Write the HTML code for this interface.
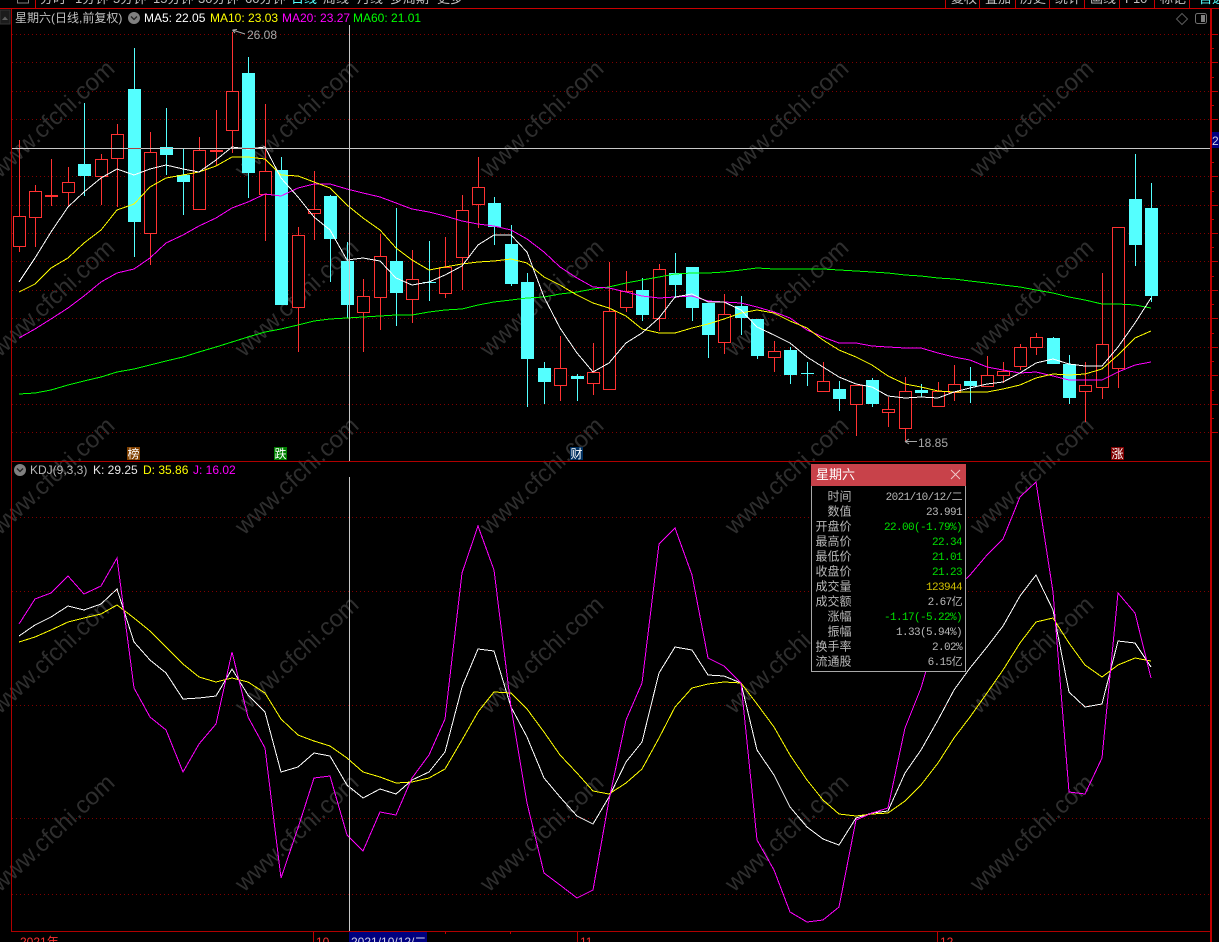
<!DOCTYPE html>
<html lang="zh">
<head>
<meta charset="utf-8">
<title>星期六 K线</title>
<style>
html,body{margin:0;padding:0;background:#000;width:1219px;height:942px;overflow:hidden}
svg{display:block;position:absolute;left:0;top:0}
text{font-family:"Liberation Sans","WenQuanYi Zen Hei","Noto Sans CJK SC",sans-serif;font-size:12px}
.m{font-family:"Liberation Mono","WenQuanYi Zen Hei","Noto Sans CJK SC",monospace;font-size:11px;letter-spacing:-.6px}
.wm text{font-size:24px;fill:#2e2e2e;text-anchor:middle}
</style>
</head>
<body>
<svg width="1219" height="942" viewBox="0 0 1219 942" xmlns="http://www.w3.org/2000/svg">
<rect width="1219" height="942" fill="#000"/>

<!-- grid -->
<g shape-rendering="crispEdges">
<path fill="none" stroke="#800000" stroke-dasharray="1 3" d="M12 34.5H1210M12 62.5H1210M12 91.5H1210M12 119.5H1210M12 176.5H1210M12 205.5H1210M12 233.5H1210M12 261.5H1210M12 290.5H1210M12 318.5H1210M12 347.5H1210M12 375.5H1210M12 404.5H1210M12 432.5H1210M12 517.5H1210M12 591.5H1210M12 705.5H1210M12 818.5H1210M12 894.5H1210"/>
</g>

<!-- watermark -->
<g class="wm">
<text x="52" y="127" transform="rotate(-43 52 118)">www.cfchi.com</text>
<text x="296" y="127" transform="rotate(-43 296 118)">www.cfchi.com</text>
<text x="541" y="127" transform="rotate(-43 541 118)">www.cfchi.com</text>
<text x="786" y="127" transform="rotate(-43 786 118)">www.cfchi.com</text>
<text x="1031" y="127" transform="rotate(-43 1031 118)">www.cfchi.com</text>
<text x="52" y="306" transform="rotate(-43 52 297)">www.cfchi.com</text>
<text x="296" y="306" transform="rotate(-43 296 297)">www.cfchi.com</text>
<text x="541" y="306" transform="rotate(-43 541 297)">www.cfchi.com</text>
<text x="786" y="306" transform="rotate(-43 786 297)">www.cfchi.com</text>
<text x="1031" y="306" transform="rotate(-43 1031 297)">www.cfchi.com</text>
<text x="52" y="484" transform="rotate(-43 52 475)">www.cfchi.com</text>
<text x="296" y="484" transform="rotate(-43 296 475)">www.cfchi.com</text>
<text x="541" y="484" transform="rotate(-43 541 475)">www.cfchi.com</text>
<text x="786" y="484" transform="rotate(-43 786 475)">www.cfchi.com</text>
<text x="1031" y="484" transform="rotate(-43 1031 475)">www.cfchi.com</text>
<text x="52" y="663" transform="rotate(-43 52 654)">www.cfchi.com</text>
<text x="296" y="663" transform="rotate(-43 296 654)">www.cfchi.com</text>
<text x="541" y="663" transform="rotate(-43 541 654)">www.cfchi.com</text>
<text x="786" y="663" transform="rotate(-43 786 654)">www.cfchi.com</text>
<text x="1031" y="663" transform="rotate(-43 1031 654)">www.cfchi.com</text>
<text x="52" y="841" transform="rotate(-43 52 832)">www.cfchi.com</text>
<text x="296" y="841" transform="rotate(-43 296 832)">www.cfchi.com</text>
<text x="541" y="841" transform="rotate(-43 541 832)">www.cfchi.com</text>
<text x="786" y="841" transform="rotate(-43 786 832)">www.cfchi.com</text>
<text x="1031" y="841" transform="rotate(-43 1031 832)">www.cfchi.com</text>
</g>

<!-- candles -->
<g shape-rendering="crispEdges">
<!-- red wicks -->
<path fill="none" stroke="#ff3232" d="M19.5 140V252M35.5 185V247M51.5 159V206M68.5 167V207M101.5 154V205M117.5 124V207M150.5 132V265M199.5 137V209M216.5 110V166M232.5 32V153M265.5 104V241M298.5 227V352M314.5 171V240M363.5 279V352M380.5 234V330M412.5 250V323M445.5 237V298M462.5 195V290M478.5 157V228M560.5 336V401M593.5 343V395M609.5 262V389M626.5 271V312M659.5 264V331M724.5 294V354M774.5 341V372M823.5 362V391M856.5 385V436M888.5 397V427M905.5 377V441M938.5 382V406M954.5 365V401M987.5 356V386M1003.5 362V383M1020.5 344V370M1036.5 333V355M1085.5 362V422M1102.5 273V399M1118.5 227V388"/>
<!-- red bodies -->
<g fill="#000" stroke="#ff3232">
<rect x="13.5" y="216.5" width="12" height="30"/>
<rect x="29.5" y="191.5" width="12" height="26"/>
<rect x="45.5" y="195.5" width="12" height="1"/>
<rect x="62.5" y="182.5" width="12" height="10"/>
<rect x="95.5" y="159.5" width="12" height="17"/>
<rect x="111.5" y="134.5" width="12" height="24"/>
<rect x="144.5" y="152.5" width="12" height="81"/>
<rect x="193.5" y="150.5" width="12" height="59"/>
<rect x="210.5" y="150.5" width="12" height="1"/>
<rect x="226.5" y="91.5" width="12" height="39"/>
<rect x="259.5" y="171.5" width="12" height="23"/>
<rect x="292.5" y="235.5" width="12" height="72"/>
<rect x="308.5" y="209.5" width="12" height="4"/>
<rect x="357.5" y="296.5" width="12" height="16"/>
<rect x="374.5" y="256.5" width="12" height="41"/>
<rect x="406.5" y="279.5" width="12" height="20"/>
<rect x="439.5" y="267.5" width="12" height="26"/>
<rect x="456.5" y="210.5" width="12" height="47"/>
<rect x="472.5" y="187.5" width="12" height="17"/>
<rect x="554.5" y="368.5" width="12" height="17"/>
<rect x="587.5" y="372.5" width="12" height="11"/>
<rect x="603.5" y="311.5" width="12" height="78"/>
<rect x="620.5" y="291.5" width="12" height="16"/>
<rect x="653.5" y="269.5" width="12" height="49"/>
<rect x="718.5" y="314.5" width="12" height="28"/>
<rect x="768.5" y="351.5" width="12" height="6"/>
<rect x="817.5" y="381.5" width="12" height="10"/>
<rect x="850.5" y="385.5" width="12" height="19"/>
<rect x="882.5" y="409.5" width="12" height="3"/>
<rect x="899.5" y="391.5" width="12" height="37"/>
<rect x="932.5" y="391.5" width="12" height="15"/>
<rect x="948.5" y="384.5" width="12" height="8"/>
<rect x="981.5" y="375.5" width="12" height="11"/>
<rect x="997.5" y="371.5" width="12" height="4"/>
<rect x="1014.5" y="347.5" width="12" height="19"/>
<rect x="1030.5" y="337.5" width="12" height="10"/>
<rect x="1079.5" y="385.5" width="12" height="6"/>
<rect x="1096.5" y="344.5" width="12" height="43"/>
<rect x="1112.5" y="227.5" width="12" height="141"/>
</g>
<!-- cyan wicks -->
<path fill="none" stroke="#54ffff" d="M84.5 103V196M134.5 48V257M166.5 108V175M183.5 149V215M248.5 57V198M281.5 157V305M330.5 195V282M347.5 242V318M396.5 208V326M429.5 241V301M494.5 197V245M511.5 225V286M527.5 273V407M544.5 362V404M577.5 374V401M642.5 278V321M675.5 253V298M692.5 267V321M708.5 303V358M741.5 296V335M757.5 319V359M790.5 347V384M807.5 362V386M839.5 381V411M872.5 378V407M921.5 384V397M970.5 367V403M1053.5 337V364M1069.5 355V404M1135.5 154V266M1151.5 183V302"/>
<!-- cyan bodies -->
<g fill="#54ffff">
<rect x="78" y="164" width="13" height="12"/>
<rect x="128" y="89" width="13" height="133"/>
<rect x="160" y="147" width="13" height="8"/>
<rect x="177" y="175" width="13" height="7"/>
<rect x="242" y="73" width="13" height="100"/>
<rect x="275" y="170" width="13" height="135"/>
<rect x="324" y="196" width="13" height="43"/>
<rect x="341" y="261" width="13" height="44"/>
<rect x="390" y="261" width="13" height="32"/>
<rect x="423" y="282" width="13" height="1"/>
<rect x="488" y="203" width="13" height="24"/>
<rect x="505" y="244" width="13" height="40"/>
<rect x="521" y="282" width="13" height="77"/>
<rect x="538" y="368" width="13" height="14"/>
<rect x="571" y="376" width="13" height="3"/>
<rect x="636" y="290" width="13" height="25"/>
<rect x="669" y="273" width="13" height="12"/>
<rect x="686" y="267" width="13" height="41"/>
<rect x="702" y="303" width="13" height="32"/>
<rect x="735" y="306" width="13" height="12"/>
<rect x="751" y="319" width="13" height="37"/>
<rect x="784" y="350" width="13" height="25"/>
<rect x="801" y="373" width="13" height="1"/>
<rect x="833" y="389" width="13" height="10"/>
<rect x="866" y="380" width="13" height="24"/>
<rect x="915" y="390" width="13" height="3"/>
<rect x="964" y="381" width="13" height="5"/>
<rect x="1047" y="338" width="13" height="26"/>
<rect x="1063" y="364" width="13" height="34"/>
<rect x="1129" y="199" width="13" height="46"/>
<rect x="1145" y="208" width="13" height="88"/>
</g>
</g>

<!-- moving averages -->
<g fill="none" shape-rendering="crispEdges">
<polyline stroke="#00ff00" points="19,394 35,393 51,390 68,385 84,381 101,377 117,372 134,369 150,365 166,361 183,357 199,352 216,347 232,342 248,337 265,332 281,329 298,325 314,321 330,319 347,318 363,317 380,316 396,315 412,315 429,312 445,310 462,309 478,305 494,302 511,300 527,298 544,297 560,294 577,292 593,289 609,287 626,283 642,280 659,277 675,274 692,273 708,273 724,272 741,270 757,268 774,269 790,269 807,269 823,269 839,270 856,271 872,272 888,273 905,275 921,276 938,278 954,279 970,281 987,283 1003,285 1020,287 1036,290 1053,293 1069,297 1085,300 1102,304 1118,304 1135,305 1151,308"/>
<polyline stroke="#ff00ff" points="19,338 35,329 51,319 68,308 84,296 101,282 117,273 134,269 150,258 166,243 183,235 199,226 216,218 232,208 248,202 265,194 281,196 298,188 314,184 330,184 347,189 363,193 380,197 396,203 412,209 429,212 445,216 462,221 478,224 494,226 511,230 527,239 544,252 560,267 577,278 593,287 609,288 626,292 642,296 659,298 675,297 692,296 708,301 724,302 741,303 757,307 774,312 790,318 807,330 823,337 839,343 856,343 872,346 888,347 905,348 921,348 938,353 954,357 970,360 987,367 1003,370 1020,373 1036,372 1053,376 1069,380 1085,380 1102,380 1118,372 1135,365 1151,362"/>
<polyline stroke="#ffff00" points="19,292 35,284 51,268 68,258 84,243 101,230 117,210 134,204 150,187 166,178 183,175 199,172 216,166 232,157 248,157 265,159 281,175 298,176 314,182 330,188 347,205 363,218 380,230 396,248 412,260 429,270 445,267 462,264 478,262 494,261 511,259 527,263 544,277 560,285 577,295 593,303 609,308 626,316 642,329 659,333 675,333 692,328 708,324 724,319 741,313 757,310 774,313 790,321 807,328 823,340 839,350 856,357 872,365 888,376 905,384 921,387 938,391 954,392 970,392 987,392 1003,389 1020,385 1036,378 1053,374 1069,375 1085,374 1102,369 1118,355 1135,338 1151,331"/>
<polyline stroke="#ffffff" points="19,282 35,258 51,232 68,207 84,192 101,178 117,169 134,175 150,169 166,165 183,169 199,172 216,160 232,147 248,149 265,147 281,178 298,197 314,217 330,230 347,260 363,258 380,261 396,278 412,285 429,282 445,275 462,266 478,245 494,235 511,235 527,252 544,297 560,328 577,353 593,372 609,363 626,343 642,333 659,318 675,297 692,294 708,302 724,302 741,310 757,327 774,335 790,343 807,357 823,367 839,377 856,384 872,387 888,396 905,398 921,397 938,398 954,392 970,388 987,384 1003,382 1020,373 1036,363 1053,359 1069,364 1085,366 1102,366 1118,347 1135,323 1151,298"/>
</g>

<!-- KDJ -->
<g fill="none" shape-rendering="crispEdges">
<polyline stroke="#ffffff" points="19,636 35,625 51,617 68,606 84,610 101,604 117,589 134,642 150,660 166,673 183,699 199,698 216,696 232,669 248,695 265,712 281,772 298,767 314,753 330,756 347,785 363,798 380,789 396,794 412,780 429,772 445,752 462,687 478,649 494,651 511,707 527,737 544,778 560,797 577,816 593,824 609,797 626,762 642,742 659,673 675,647 692,650 708,675 724,676 741,683 757,750 774,775 790,807 807,827 823,839 839,845 856,818 872,813 888,811 905,773 921,750 938,720 954,690 970,668 987,647 1003,626 1020,596 1036,575 1053,610 1069,692 1085,707 1102,704 1118,641 1135,643 1151,667"/>
<polyline stroke="#ffff00" points="19,642 35,637 51,630 68,622 84,618 101,614 117,605 134,618 150,631 166,647 183,664 199,677 216,682 232,678 248,682 265,693 281,719 298,735 314,741 330,746 347,758 363,772 380,777 396,783 412,782 429,778 445,769 462,740 478,712 494,692 511,693 527,709 544,732 560,755 577,773 593,791 609,794 626,783 642,769 659,738 675,707 692,688 708,684 724,682 741,683 757,704 774,727 790,755 807,780 823,800 839,814 856,816 872,814 888,813 905,801 921,785 938,763 954,738 970,717 987,693 1003,670 1020,643 1036,622 1053,618 1069,643 1085,665 1102,677 1118,665 1135,658 1151,661"/>
<polyline stroke="#ff00ff" points="19,624 35,599 51,593 68,576 84,594 101,586 117,558 134,688 150,717 166,730 183,772 199,744 216,724 232,652 248,717 265,748 281,878 298,828 314,778 330,776 347,835 363,851 380,812 396,815 412,778 429,755 445,719 462,573 478,526 494,570 511,707 527,803 544,873 560,885 577,898 593,890 609,800 626,720 642,683 659,544 675,528 692,575 708,658 724,666 741,683 757,840 774,870 790,912 807,922 823,920 839,907 856,820 872,813 888,808 905,728 921,688 938,630 954,590 970,575 987,555 1003,539 1020,497 1036,482 1053,592 1069,792 1085,794 1102,758 1118,593 1135,613 1151,678"/>
</g>

<!-- crosshair -->
<g shape-rendering="crispEdges">
<path fill="none" stroke="#c8c8c8" d="M12 148.5H1210M349.5 25V461M349.5 477V931"/>
<path fill="none" stroke="#a84040" d="M128 148.5H141M242 148.5H255"/>
</g>

<!-- frame -->
<g shape-rendering="crispEdges" fill="none">
<path stroke="#b00000" d="M11.5 8V932M12 461.5H1210M12 931.5H1210"/>
<path stroke="#c80000" d="M0 8.5H1219M35.5 0V8M945.5 0V8M979.5 0V8M1015.5 0V8M1049.5 0V8M1084.5 0V8M1119.5 0V8M1154.5 0V8M1189.5 0V8"/>
<rect x="1210" y="9" width="2" height="933" fill="#c00000"/>
<path stroke="#c00000" d="M1212 34.5h6M1212 62.5h6M1212 91.5h6M1212 119.5h6M1212 176.5h6M1212 205.5h6M1212 233.5h6M1212 261.5h6M1212 290.5h6M1212 318.5h6M1212 347.5h6M1212 375.5h6M1212 404.5h6M1212 432.5h6M1212 48.5h2M1212 77.5h2M1212 105.5h2M1212 162.5h2M1212 191.5h2M1212 219.5h2M1212 247.5h2M1212 276.5h2M1212 304.5h2M1212 333.5h2M1212 361.5h2M1212 390.5h2M1212 418.5h2"/>
<path stroke="#c00000" d="M313.5 932V942M577.5 932V942M937.5 932V942M445.5 932v2M510.5 932v2"/>
</g>

<!-- top toolbar -->
<g fill="#c0c0c0">
<text x="40" y="3" style="font-size:13px">分时</text>
<text x="75" y="3" style="font-size:13px">1分钟</text>
<text x="113" y="3" style="font-size:13px">5分钟</text>
<text x="153" y="3" style="font-size:13px">15分钟</text>
<text x="198" y="3" style="font-size:13px">30分钟</text>
<text x="245" y="3" style="font-size:13px">60分钟</text>
<text x="291" y="3" fill="#54ffff" style="font-size:13px">日线</text>
<text x="323" y="3" style="font-size:13px">周线</text>
<text x="357" y="3" style="font-size:13px">月线</text>
<text x="390" y="3" style="font-size:13px">多周期</text>
<text x="437" y="3" style="font-size:13px">更多</text>
<text x="951" y="3" style="font-size:13px">复权</text>
<text x="985" y="3" style="font-size:13px">叠加</text>
<text x="1020" y="3" style="font-size:13px">历史</text>
<text x="1055" y="3" style="font-size:13px">统计</text>
<text x="1090" y="3" style="font-size:13px">画线</text>
<text x="1125" y="3" style="font-size:13px">F10</text>
<text x="1160" y="3" style="font-size:13px">标记</text>
<text x="1199" y="3" fill="#54ffff" style="font-size:13px">自选</text>
</g>
<rect x="17.5" y="-3" width="11" height="6" fill="none" stroke="#808080" shape-rendering="crispEdges"/>
<rect x="0" y="10" width="10" height="14" fill="#1c1c1c" stroke="#333" shape-rendering="crispEdges"/>
<path d="M2 20L5 16.5L8 20Z" fill="#606060"/>

<!-- headers -->
<text x="15" y="22" fill="#c0c0c0">星期六(日线,前复权)</text>
<circle cx="134" cy="18" r="6" fill="#808080"/>
<path d="M131 16.5L134 19.5L137 16.5" fill="none" stroke="#222" stroke-width="1.3"/>
<text x="144" y="22" fill="#ffffff">MA5: 22.05</text>
<text x="210" y="22" fill="#ffff00">MA10: 23.03</text>
<text x="282" y="22" fill="#ff00ff">MA20: 23.27</text>
<text x="353" y="22" fill="#00ff00">MA60: 21.01</text>

<path d="M1182 13.5L1187.5 19L1182 24.5L1176.5 19Z" fill="none" stroke="#5a5a5a"/>
<rect x="1195.5" y="13.5" width="11" height="10" rx="2" fill="none" stroke="#707070"/>
<rect x="1201" y="15" width="4" height="7" fill="#808080"/>

<circle cx="20" cy="470" r="6" fill="#808080"/>
<path d="M17 468.5L20 471.5L23 468.5" fill="none" stroke="#222" stroke-width="1.3"/>
<text x="30" y="474" fill="#b8b8b8">KDJ(9,3,3)</text>
<text x="93" y="474" fill="#e8e8e8">K: 29.25</text>
<text x="143" y="474" fill="#ffff00">D: 35.86</text>
<text x="193" y="474" fill="#ff00ff">J: 16.02</text>

<!-- price annotations -->
<path d="M232.5 30L245 34M232.5 30L237 29.5M232.5 30L235 33" fill="none" stroke="#a8a8a8"/>
<text x="247" y="39" fill="#a8a8a8">26.08</text>
<path d="M905 441.5H917M905 441.5L909 439M905 441.5L909 444" fill="none" stroke="#a8a8a8"/>
<text x="918" y="447" fill="#a8a8a8">18.85</text>

<!-- right axis label -->
<rect x="1212" y="132" width="7" height="16" fill="#000080"/>
<text x="1212" y="145" fill="#d0d0e8">2</text>

<!-- event badges -->
<rect x="127" y="447" width="13" height="13" fill="#804000"/>
<text x="127.5" y="458" fill="#fff">榜</text>
<rect x="274" y="447" width="13" height="13" fill="#008000"/>
<text x="274.5" y="458" fill="#fff">跌</text>
<rect x="570" y="447" width="13" height="13" fill="#003060"/>
<text x="570.5" y="458" fill="#fff">财</text>
<rect x="1111" y="447" width="13" height="13" fill="#800000"/>
<text x="1111.5" y="458" fill="#fff">涨</text>

<!-- bottom axis -->
<text x="20" y="946" fill="#ff3232">2021年</text>
<text x="316" y="946" fill="#ff3232">10</text>
<rect x="349" y="932" width="78" height="10" fill="#000080"/>
<text x="351" y="946" fill="#d0d0e8">2021/10/12/二</text>
<text x="580" y="946" fill="#ff3232">11</text>
<text x="940" y="946" fill="#ff3232">12</text>

<!-- tooltip -->
<g>
<rect x="811.5" y="464.5" width="154" height="207" fill="#000" stroke="#a8a8a8" shape-rendering="crispEdges"/>
<rect x="811" y="464" width="155" height="22" fill="#c8424a"/>
<text x="816" y="479" fill="#ffffff" style="font-size:13px">星期六</text>
<path d="M951 470L960 479M960 470L951 479" stroke="#f0c8c8" fill="none"/>
<g fill="#b8b8b8" text-anchor="end">
<text x="851.5" y="500.5">时间</text>
<text x="851.5" y="515.5">数值</text>
<text x="851.5" y="530.5">开盘价</text>
<text x="851.5" y="545.5">最高价</text>
<text x="851.5" y="560.5">最低价</text>
<text x="851.5" y="575.5">收盘价</text>
<text x="851.5" y="590.5">成交量</text>
<text x="851.5" y="605.5">成交额</text>
<text x="851.5" y="620.5">涨幅</text>
<text x="851.5" y="635.5">振幅</text>
<text x="851.5" y="650.5">换手率</text>
<text x="851.5" y="665.5">流通股</text>
<text class="m" x="962" y="500">2021/10/12/二</text>
<text class="m" x="962" y="515">23.991</text>
<text class="m" x="962" y="530" fill="#00e000">22.00(-1.79%)</text>
<text class="m" x="962" y="545" fill="#00e000">22.34</text>
<text class="m" x="962" y="560" fill="#00e000">21.01</text>
<text class="m" x="962" y="575" fill="#00e000">21.23</text>
<text class="m" x="962" y="590" fill="#d0c000">123944</text>
<text class="m" x="962" y="605">2.67亿</text>
<text class="m" x="962" y="620" fill="#00e000">-1.17(-5.22%)</text>
<text class="m" x="962" y="635">1.33(5.94%)</text>
<text class="m" x="962" y="650">2.02%</text>
<text class="m" x="962" y="665">6.15亿</text>
</g>
</g>
</svg>
</body>
</html>
